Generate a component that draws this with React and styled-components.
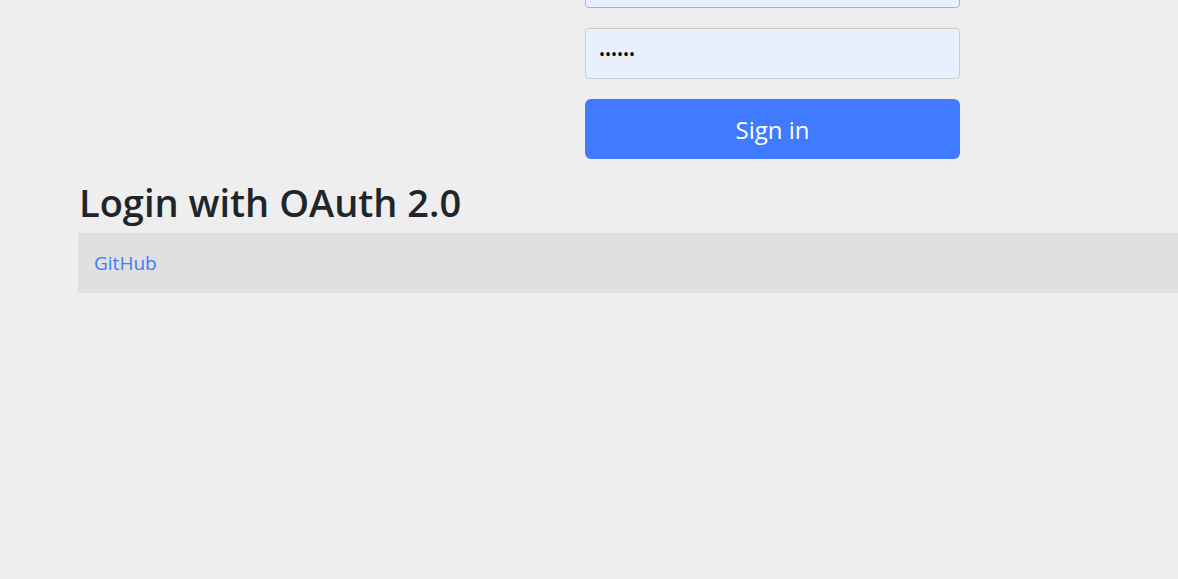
import React from 'react'
import styled, { createGlobalStyle } from 'styled-components'

const GlobalStyle = createGlobalStyle`
    body {
        margin: 0;
        background-color: #eeeeee;
        font-family: "Open Sans", "Noto Sans", sans-serif;
        overflow: hidden;
    }
`

const Page = styled.div`
    width: 1389px;
    margin-top: -43px;
    margin-left: 78px;
`

const LoginForm = styled.form`
    width: 375px;
    margin: 0 auto;
    display: flex;
    flex-direction: column;
    gap: 20px;
`

const Field = styled.input`
    box-sizing: border-box;
    height: 51px;
    width: 100%;
    margin: 0;
    padding: 0 13px;
    border: 1px solid ${props => (props.focused ? '#8fb8f6' : '#cccccc')};
    border-radius: 4px;
    background-color: #e8f0fe;
    font-family: inherit;
    font-size: 16px;
    color: #000;
    outline: none;
`

const SubmitButton = styled.button`
    box-sizing: border-box;
    height: 60px;
    width: 100%;
    border: none;
    border-radius: 6px;
    background-color: #407bff;
    color: #ffffff;
    font-family: inherit;
    font-size: 24px;
    cursor: pointer;
`

const Heading = styled.h2`
    margin: 20px 0 8px 1px;
    font-size: 38px;
    font-weight: 600;
    line-height: 46px;
    color: #212529;
`

const ProviderTable = styled.table`
    width: 100%;
    border-collapse: collapse;
`

const ProviderRow = styled.tr`
    background-color: #e0e0e0;
`

const ProviderCell = styled.td`
    height: 60px;
    padding: 0 16px;
    font-size: 19px;
    a {
        color: #407bff;
        text-decoration: none;
    }
`

export default function App() {
    return (
        <>
            <GlobalStyle />
            <Page>
                <LoginForm onSubmit={e => e.preventDefault()}>
                    <Field focused name="username" type="text" defaultValue="user" />
                    <Field name="password" type="password" defaultValue="secret" />
                    <SubmitButton type="submit">Sign in</SubmitButton>
                </LoginForm>
                <Heading>Login with OAuth 2.0</Heading>
                <ProviderTable>
                    <tbody>
                        <ProviderRow>
                            <ProviderCell>
                                <a href="#github">GitHub</a>
                            </ProviderCell>
                        </ProviderRow>
                    </tbody>
                </ProviderTable>
            </Page>
        </>
    )
}
